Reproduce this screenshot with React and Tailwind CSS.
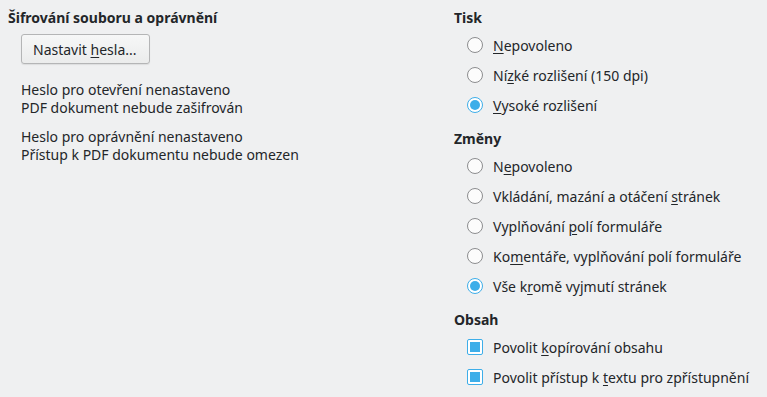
import React from "react";

// mnemonic underline
const U = ({ children }) => <span className="underline underline-offset-2">{children}</span>;

const Radio = ({ checked, children }) => (
  <div className="h-[30px] flex items-center pl-[13px]">
    <span
      className={
        "w-[16px] h-[16px] rounded-full border flex items-center justify-center shrink-0 " +
        (checked ? "border-[#3daee9] bg-white" : "border-[#8c8d8f] bg-[#fcfcfc]")
      }
    >
      {checked && <span className="w-[10px] h-[10px] rounded-full bg-[#3daee9]" />}
    </span>
    <span className="ml-[10px]">{children}</span>
  </div>
);

const Check = ({ children }) => (
  <div className="h-[30px] flex items-center pl-[13px]">
    <span className="w-[16px] h-[16px] rounded-[2px] border border-[#3daee9] bg-white flex items-center justify-center shrink-0">
      <span className="w-[10px] h-[10px] bg-[#3daee9]" />
    </span>
    <span className="ml-[10px]">{children}</span>
  </div>
);

const Heading = ({ children }) => (
  <div className="h-[20px] leading-[20px] font-bold">{children}</div>
);

export default function App() {
  return (
    <div
      className="w-[767px] h-[397px] bg-[#eff0f1] text-[#232629] text-[14px] flex pt-[8px] overflow-hidden"
      style={{ fontFamily: '"Noto Sans", "Open Sans", sans-serif' }}
    >
      {/* levý sloupec */}
      <div className="w-[454px] pl-[8px]">
        <Heading>Šifrování souboru a oprávnění</Heading>
        <div className="pl-[13px]">
          <button className="mt-[6px] h-[30px] w-[129px] rounded-[3px] border border-[#b4b5b6] bg-gradient-to-b from-[#f6f7f7] to-[#ebecec] text-left pl-[11px] shadow-[0_1px_1px_rgba(0,0,0,0.08)]">
            Nastavit <U>h</U>esla...
          </button>
          <div className="mt-[17px] leading-[18px]">
            <div>Heslo pro otevření nenastaveno</div>
            <div>PDF dokument nebude zašifrován</div>
          </div>
          <div className="mt-[11px] leading-[18px]">
            <div>Heslo pro oprávnění nenastaveno</div>
            <div>Přístup k PDF dokumentu nebude omezen</div>
          </div>
        </div>
      </div>

      {/* pravý sloupec */}
      <div className="flex-1">
        <Heading>Tisk</Heading>
        <div className="mt-[2px]">
          <Radio><U>N</U>epovoleno</Radio>
          <Radio>Ní<U>z</U>ké rozlišení (150 dpi)</Radio>
          <Radio checked><U>V</U>ysoké rozlišení</Radio>
        </div>

        <div className="mt-[9px]">
          <Heading>Změny</Heading>
        </div>
        <div className="mt-[2px]">
          <Radio>N<U>e</U>povoleno</Radio>
          <Radio>Vkládání, mazání a otáčení <U>s</U>tránek</Radio>
          <Radio>Vyplňování <U>p</U>olí formuláře</Radio>
          <Radio>Ko<U>m</U>entáře, vyplňování polí formuláře</Radio>
          <Radio checked>Vše k<U>r</U>omě vyjmutí stránek</Radio>
        </div>

        <div className="mt-[9px]">
          <Heading>Obsah</Heading>
        </div>
        <div className="mt-[2px]">
          <Check>Povolit <U>k</U>opírování obsahu</Check>
          <Check>Povolit přístup k <U>t</U>extu pro zpřístupnění</Check>
        </div>
      </div>
    </div>
  );
}
